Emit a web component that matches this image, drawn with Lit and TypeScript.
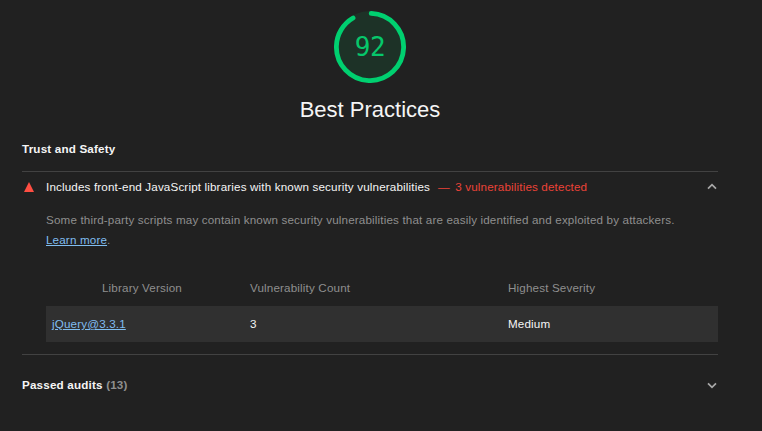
import { LitElement, html, css } from "lit";
import { customElement, property } from "lit/decorators.js";

const ARC_RADIUS = 56;
const ARC_LENGTH = 2 * Math.PI * ARC_RADIUS;

@customElement("score-gauge")
class ScoreGauge extends LitElement {
  @property({ type: Number }) score = 0;
  @property() label = "";

  static styles = css`
    :host { display: flex; flex-direction: column; align-items: center; letter-spacing: 0; }
    .dial { display: grid; width: 72px; height: 72px; place-items: center; }
    .dial > * { grid-area: 1 / 1; }
    .ring { display: block; width: 72px; height: 72px; }
    .base { fill: #00cc66; opacity: 0.1; }
    .arc {
      fill: none; stroke: #00d070; stroke-width: 8; stroke-linecap: round;
      transform: rotate(-87.95deg); transform-origin: 60px 60px;
    }
    .value { font: 26px/30px "DejaVu Sans Mono", monospace; letter-spacing: -0.3px; color: #06c86b; }
    .label { margin-top: 13px; font-size: 22px; line-height: 28px; color: #f5f5f5; }
  `;

  render() {
    const arc = (this.score / 100) * ARC_LENGTH - 4;
    return html`
      <div class="dial">
        <svg class="ring" viewBox="0 0 120 120">
          <circle class="base" cx="60" cy="60" r="60"></circle>
          <circle class="arc" cx="60" cy="60" r="${ARC_RADIUS}" stroke-dasharray="${arc} ${ARC_LENGTH}"></circle>
        </svg>
        <span class="value">${this.score}</span>
      </div>
      <div class="label">${this.label}</div>
    `;
  }
}

@customElement("chevron-icon")
class ChevronIcon extends LitElement {
  @property({ type: Boolean }) open = false;

  static styles = css`
    :host { display: block; width: 12px; height: 12px; }
    svg { display: block; }
    path { fill: none; stroke: #a8a8a8; stroke-width: 1.7; }
  `;

  render() {
    return html`<svg width="12" height="12" viewBox="0 0 12 12">
      <path d="${this.open ? "M2 7.7L6 3.7L10 7.7" : "M2 4.3L6 8.3L10 4.3"}"></path>
    </svg>`;
  }
}

@customElement("app-root")
class AppRoot extends LitElement {
  static styles = css`
    :host {
      display: block; box-sizing: border-box; height: 431px; overflow: hidden;
      padding: 11px 44px 0 22px; background: #212121; color: #f5f5f5;
      font: 11.65px/20px "Liberation Sans", Arial, sans-serif; letter-spacing: 0.151px;
    }
    .group-title { margin-top: 15px; font-weight: bold; letter-spacing: 0.18px; }
    .audit { margin-top: 12px; border-top: 1px solid #424242; border-bottom: 1px solid #424242; height: 182px; }
    .summary { display: flex; align-items: center; height: 30px; }
    .triangle { display: block; width: 24px; height: 12px; flex: none; }
    .triangle path { fill: #ff4e42; }
    .finding { color: #eb4338; margin-left: 8px; }
    .dash { margin-right: 2px; }
    .toggle { margin-left: auto; }
    .details { margin-left: 24px; }
    .description { padding-top: 8px; color: #8f8f8f; }
    .description p { margin: 0; }
    a { color: #80bdf0; text-decoration: underline; }
    .table { margin-top: 20px; }
    .row { display: grid; grid-template-columns: 198px 258px 1fr; align-items: center; height: 36px; padding: 0 6px; }
    .row.head { color: #8f8f8f; }
    .row.item { background: #303030; }
    .first { padding-left: 50px; }
    .passed { display: flex; align-items: center; height: 60px; font-weight: bold; letter-spacing: 0.18px; }
    .count { color: #8f8f8f; margin-left: 3.5px; }
  `;

  render() {
    return html`
      <score-gauge score="92" label="Best Practices"></score-gauge>
      <div class="group-title">Trust and Safety</div>
      <section class="audit">
        <div class="summary">
          <svg class="triangle" viewBox="0 0 24 12"><path d="M7 1L12 11H2Z"></path></svg>
          <span>Includes front-end JavaScript libraries with known security vulnerabilities</span>
          <span class="finding"><span class="dash">—</span> 3 vulnerabilities detected</span>
          <chevron-icon class="toggle" open></chevron-icon>
        </div>
        <div class="details">
          <div class="description">
            <p>Some third-party scripts may contain known security vulnerabilities that are easily identified and exploited by attackers.</p>
            <p><a>Learn more</a>.</p>
          </div>
          <div class="table">
            <div class="row head">
              <span class="first">Library Version</span><span>Vulnerability Count</span><span>Highest Severity</span>
            </div>
            <div class="row item">
              <span><a>jQuery@3.3.1</a></span><span>3</span><span>Medium</span>
            </div>
          </div>
        </div>
      </section>
      <div class="passed">
        <span>Passed audits</span><span class="count">(13)</span>
        <chevron-icon class="toggle"></chevron-icon>
      </div>
    `;
  }
}
